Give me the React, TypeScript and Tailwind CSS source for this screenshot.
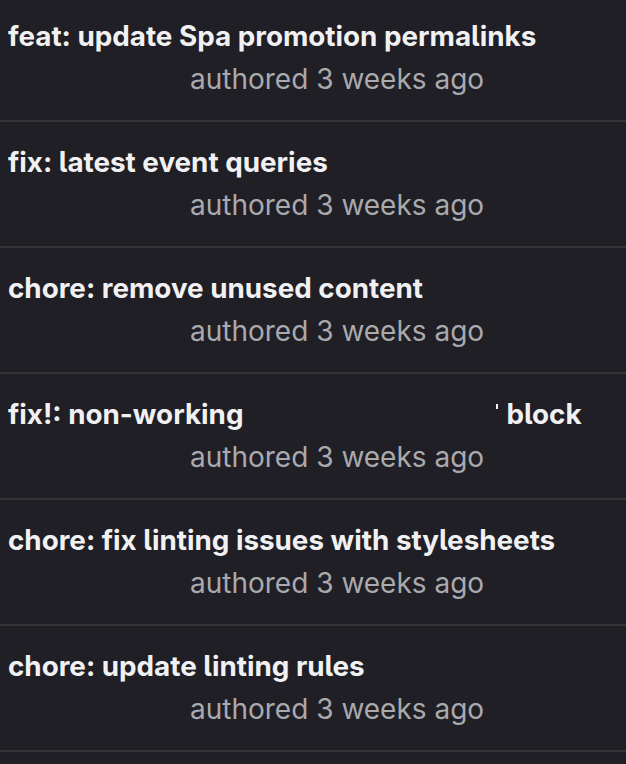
const commits = [
  { title: "feat: update Spa promotion permalinks" },
  { title: "fix: latest event queries" },
  { title: "chore: remove unused content" },
  { title: "fix!: non-working", tail: "block" },
  { title: "chore: fix linting issues with stylesheets" },
  { title: "chore: update linting rules" },
];

export default function App() {
  return (
    <div
      className="h-[764px] w-full bg-[#1f1f25] overflow-hidden [font-feature-settings:'cv05']"
      style={{ fontFamily: "Inter, 'Liberation Sans', sans-serif" }}
    >
      <div className="-mt-[4px]">
        {commits.map((c, i) => (
          <div key={i} className="h-[126px] border-b-2 border-[#333338] pt-[19px] box-border">
            <div className="pl-2 text-[27.8px] leading-[43px] font-bold text-[#f1f1f3] whitespace-nowrap flex items-baseline">
              <span>{c.title}</span>
              {c.tail && (
                <>
                  <span className="inline-block w-[253px]" />
                  <span className="inline-block w-[2px] h-[5px] bg-[#f1f1f3] self-start mt-[11px] mr-[8px]" />
                  <span>{c.tail}</span>
                </>
              )}
            </div>
            <div className="pl-[190px] text-[28px] leading-[43px] text-[#a9a9ae] whitespace-nowrap">
              authored 3 weeks ago
            </div>
          </div>
        ))}
      </div>
    </div>
  );
}
